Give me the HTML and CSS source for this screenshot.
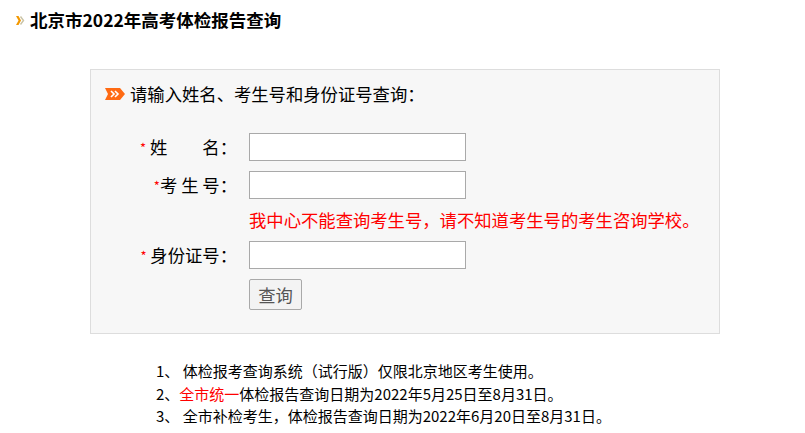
FILE: index.html
```html
<!DOCTYPE html>
<html lang="zh-CN">
<head>
    <meta charset="UTF-8">
    <meta name="viewport" content="width=device-width, initial-scale=1.0">
    <title>北京市2022年高考体检报告查询</title>
    <link rel="stylesheet" href="styles.css">
</head>
<body>
    <h1 class="page-title">
        <svg class="title-icon" width="9" height="9" viewBox="0 0 9 9">
            <polygon points="0,0 2.5,0 5,4.5 2.5,9 0,9 2.5,4.5" fill="#f39800"/>
            <polyline points="4.5,0.5 7.5,4.5 4.5,8.5" fill="none" stroke="#c9c3a6" stroke-width="1.4"/>
        </svg>
        北京市2022年高考体检报告查询
    </h1>

    <!-- Query box -->
    <div class="query-box">
        <div class="query-head">
            <svg class="head-icon" width="20" height="12" viewBox="0 0 20 12">
                <polygon points="0,0 15,0 20,6 15,12 0,12 3,6" fill="#ff6a13"/>
                <polyline points="6,3 9,6 6,9" fill="none" stroke="#fff" stroke-width="1.6"/>
                <polyline points="10,3 13,6 10,9" fill="none" stroke="#fff" stroke-width="1.6"/>
            </svg>
            <span>请输入姓名、考生号和身份证号查询：</span>
        </div>

        <form class="query-form">
            <label class="form-label"><span class="req">*</span> 姓<span class="name-gap"></span>名：</label>
            <input class="form-input" type="text">

            <label class="form-label"><span class="req">*</span>考 生 号：</label>
            <input class="form-input" type="text">

            <p class="form-note">我中心不能查询考生号，请不知道考生号的考生咨询学校。</p>

            <label class="form-label"><span class="req">*</span> 身份证号：</label>
            <input class="form-input" type="text">

            <button class="form-btn" type="button">查询</button>
        </form>
    </div>

    <!-- Notes -->
    <div class="notes">
        <div>1、 体检报考查询系统（试行版）仅限北京地区考生使用。</div>
        <div>2、<span class="hl">全市统一</span>体检报告查询日期为2022年5月25日至8月31日。</div>
        <div>3、 全市补检考生，体检报告查询日期为2022年6月20日至8月31日。</div>
    </div>
</body>
</html>
```

FILE: styles.css
```css
body {
    margin: 0;
    background: #fff;
    color: #000;
    font-family: "Noto Sans CJK SC", sans-serif;
}
.page-title {
    display: flex;
    align-items: center;
    gap: 5px;
    margin: 0;
    padding: 8px 0 0 16px;
    font-size: 17.5px;
    line-height: 24px;
    font-weight: bold;
}
.query-box {
    box-sizing: border-box;
    width: 630px;
    margin: 37px 0 0 90px;
    padding: 12px 0 23px 14px;
    border: 1px solid #ddd;
    background: #f7f7f7;
    font-size: 13pt;
}
.query-head {
    display: flex;
    align-items: center;
    gap: 5px;
    line-height: 24px;
}
.query-form {
    display: grid;
    grid-template-columns: 132px 217px;
    column-gap: 12px;
    row-gap: 10px;
    align-items: center;
    margin-top: 27px;
}
.form-label {
    height: 28px;
    text-align: right;
    line-height: 28px;
    white-space: pre;
}
.req {
    color: #f00;
    font-size: 13px;
    line-height: 1;
    vertical-align: 1px;
}
.name-gap {
    display: inline-block;
    width: 35px;
}
.form-input {
    box-sizing: border-box;
    width: 217px;
    height: 28px;
    padding: 0 4px;
    border: 1px solid #a9a9a9;
    background: #fff;
    font: inherit;
}
.form-note {
    grid-column: 1 / span 2;
    height: 22px;
    margin: 0 0 0 144px;
    color: #f00;
    line-height: 22px;
    white-space: nowrap;
}
.form-btn {
    grid-column: 2;
    width: 53px;
    height: 31px;
    padding: 0;
    border: 1px solid #a9a9a9;
    border-radius: 2px;
    background: #f3f3f3;
    color: #555;
    font: inherit;
    line-height: 29px;
}
.notes {
    margin: 26px 0 0 156px;
    font-size: 15px;
    line-height: 22.5px;
}
.hl {
    color: #f00;
}
```
